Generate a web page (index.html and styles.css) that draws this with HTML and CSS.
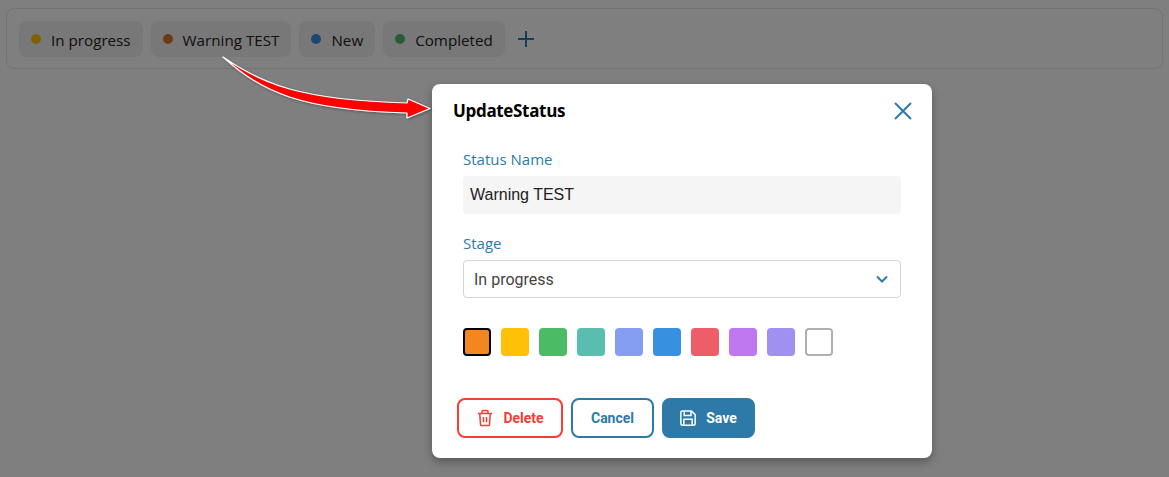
FILE: index.html
```html
<!DOCTYPE html>
<html lang="en">
<head>
<meta charset="utf-8">
<title>Update Status</title>
<link rel="stylesheet" href="styles.css">
</head>
<body>
<div class="bar">
  <div class="chip"><span class="dot dot-amber"></span><span class="chip-text">In progress</span></div>
  <div class="chip"><span class="dot dot-orange"></span><span class="chip-text">Warning TEST</span></div>
  <div class="chip"><span class="dot dot-blue"></span><span class="chip-text">New</span></div>
  <div class="chip"><span class="dot dot-green"></span><span class="chip-text">Completed</span></div>
  <svg class="plus" width="20" height="20" viewBox="0 0 20 20"><path d="M10 2v16M2 10h16"/></svg>
</div>
<div class="overlay"></div>
<section class="modal">
  <header class="modal-head">
    <h2 class="title">UpdateStatus</h2>
    <svg class="close" width="20" height="20" viewBox="0 0 20 20"><path d="M2 2l16 16M18 2L2 18"/></svg>
  </header>
  <div class="form">
    <label class="label">Status Name</label>
    <div class="input">Warning TEST</div>
    <label class="label label-stage">Stage</label>
    <div class="select">
      <span>In progress</span>
      <svg class="chev" width="14" height="10" viewBox="0 0 14 10"><path d="M2 2.500l5 5 5-5"/></svg>
    </div>
    <div class="swatches">
      <span class="swatch s1"></span><span class="swatch s2"></span><span class="swatch s3"></span><span class="swatch s4"></span><span class="swatch s5"></span><span class="swatch s6"></span><span class="swatch s7"></span><span class="swatch s8"></span><span class="swatch s9"></span><span class="swatch s10"></span>
    </div>
  </div>
  <footer class="actions">
    <button class="btn btn-delete">
      <svg class="ico" width="18" height="18" viewBox="0 0 24 24"><path d="M2.500 6h19M8 6V3.500A1.500 1.500 0 0 1 9.500 2h5A1.500 1.500 0 0 1 16 3.500V6M5 6l1 14.500A1.500 1.500 0 0 0 7.500 22h9a1.500 1.500 0 0 0 1.500-1.500L19 6M10 10.500v7M14 10.500v7"/></svg>
      Delete
    </button>
    <button class="btn btn-cancel">Cancel</button>
    <button class="btn btn-save">
      <svg class="ico" width="18" height="18" viewBox="0 0 24 24"><path d="M4.500 2.500h12l5 5v12a2 2 0 0 1-2 2h-15a2 2 0 0 1-2-2v-15a2 2 0 0 1 2-2zM7 2.500v6h9v-6M6.500 21.500v-8h11v8"/></svg>
      Save
    </button>
  </footer>
</section>
<svg class="arrow" width="240" height="90" viewBox="210 45 240 90">
  <defs><filter id="sh" x="-10%" y="-20%" width="120%" height="140%"><feDropShadow dx="1" dy="1" stdDeviation="1.500" flood-color="#000" flood-opacity=".35"/></filter></defs>
  <path filter="url(#sh)" d="M223 57C262 84 300 100 407 103L408 99L430 108.500L407 118L407 113C300 110 262 92 223 57Z"/>
</svg>
</body>
</html>
```
FILE: styles.css
```css
* { box-sizing: border-box; }
html, body { height: 100%; }
body {
  margin: 0;
  padding: 8px 6px;
  background: #fff;
  overflow: hidden;
  font-family: "Open Sans", "Noto Sans", sans-serif;
}
.bar {
  display: flex;
  align-items: center;
  gap: 8px;
  height: 61px;
  padding: 0 12px;
  border: 1px solid #e6e6e6;
  border-radius: 8px;
}
.chip {
  display: flex;
  align-items: center;
  gap: 10px;
  height: 36px;
  padding: 0 12px;
  border-radius: 8px;
  background: #f0f0f0;
  font-size: 15.200px;
  color: #222;
}
.chip-text { margin-top: 2px; }
.dot { width: 10px; height: 10px; border-radius: 50%; }
.dot-amber { background: #ffc107; }
.dot-orange { background: #d8752a; }
.dot-blue { background: #3b8fdd; }
.dot-green { background: #4cbb66; }
.plus { margin-left: 3px; fill: none; stroke: #2d7aa8; stroke-width: 2; }
.overlay { position: absolute; inset: 0; background: rgba(0, 0, 0, .5); }
.modal {
  position: absolute;
  left: 432px;
  top: 84px;
  width: 500px;
  height: 374px;
  padding: 0 21px;
  background: #fff;
  border-radius: 8px;
  box-shadow: 0 4px 10px rgba(0, 0, 0, .3);
}
.modal-head {
  display: flex;
  align-items: center;
  justify-content: space-between;
  height: 53px;
}
.title {
  margin: 0;
  font-size: 17px;
  letter-spacing: -.33px;
  font-weight: 700;
  color: #000;
  font-family: "Open Sans", sans-serif;
}
.close { margin-right: -2px; fill: none; stroke: #2d7aa8; stroke-width: 2; }
.form { padding: 0 10px; margin-top: 12px; }
.label {
  display: block;
  height: 27px;
  font-size: 15px;
  line-height: 20px;
  color: #2d7aa8;
}
.label-stage { margin-top: 19px; }
.input {
  height: 38px;
  padding: 0 7px;
  background: #f5f5f5;
  border-radius: 4px;
  font: 16px/38px "Liberation Sans", sans-serif;
  color: #222;
}
.select {
  display: flex;
  align-items: center;
  justify-content: space-between;
  height: 38px;
  padding: 0 11px 0 10px;
  border: 1px solid #d5d5d5;
  border-radius: 4px;
  font: 16px Roboto, sans-serif;
  color: #444;
}
.chev { fill: none; stroke: #2d7aa8; stroke-width: 2; }
.swatches { display: flex; gap: 10px; margin-top: 30px; }
.swatch { width: 28px; height: 28px; border-radius: 4px; }
.s1 { background: #f28620; border: 2px solid #000; }
.s2 { background: #ffc107; }
.s3 { background: #4cbb66; }
.s4 { background: #5bbcb0; }
.s5 { background: #849df0; }
.s6 { background: #3890e0; }
.s7 { background: #ee5e68; }
.s8 { background: #c078f0; }
.s9 { background: #a090f0; }
.s10 { background: #fff; border: 2px solid #b0b0b0; }
.actions { display: flex; gap: 8px; margin-top: 42px; padding-left: 4px; }
.btn {
  display: flex;
  align-items: center;
  justify-content: center;
  height: 40px;
  border-radius: 8px;
  font: 700 14px Roboto, sans-serif;
  background: #fff;
}
.ico { fill: none; stroke: currentColor; stroke-width: 2; }
.btn-delete { width: 106px; gap: 9px; border: 2px solid #f93c34; color: #f93c34; }
.btn-cancel { width: 83px; border: 2px solid #2d7aa8; color: #2d7aa8; }
.btn-save { width: 93px; gap: 9px; padding-right: 7px; border: 2px solid #2d7aa8; background: #2d7aa8; color: #fff; }
.arrow { position: absolute; left: 210px; top: 45px; fill: #f00; stroke: #fff; stroke-width: 1.200; stroke-linejoin: round; }
```
